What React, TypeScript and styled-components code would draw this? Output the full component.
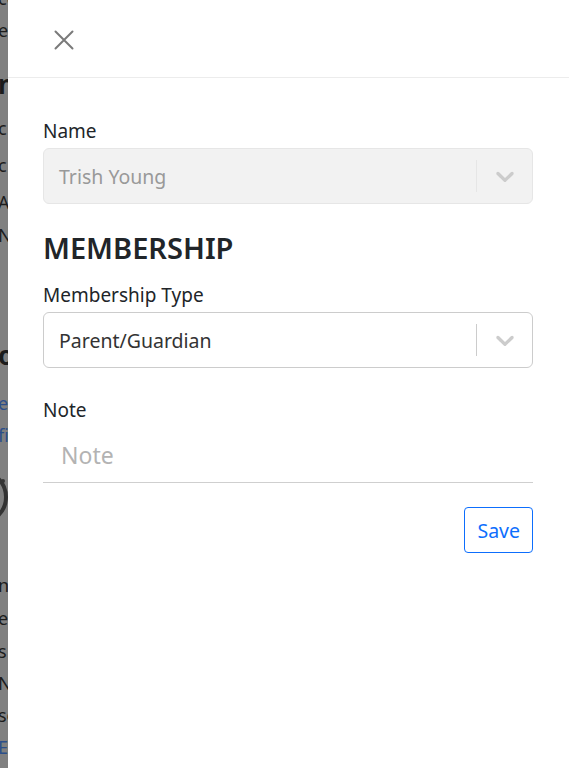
import styled, { createGlobalStyle } from "styled-components";

const GlobalStyle = createGlobalStyle`
  html, body {
    margin: 0;
    padding: 0;
    background: #fff;
    font-family: "Segoe UI", "Noto Sans", "Open Sans", sans-serif;
  }
  * { box-sizing: border-box; }
`;

const Page = styled.div`
  position: relative;
  width: 569px;
  height: 768px;
  overflow: hidden;
  background: #808080;
`;

const Backdrop = styled.div`
  width: 8px;
  height: 100%;
  overflow: hidden;
  background: #808080;
  display: flex;
  flex-direction: column;
`;

const BackLine = styled.div<{ $top: number; $color?: string; $size?: number; $bold?: boolean }>`
  margin-top: ${(p) => p.$top}px;
  height: 20px;
  line-height: 20px;
  font-size: ${(p) => p.$size ?? 18}px;
  font-weight: ${(p) => (p.$bold ? 700 : 400)};
  color: ${(p) => p.$color ?? "#1c1c1c"};
  white-space: nowrap;
  margin-left: -2px;
`;

const BackIcon = styled.svg`
  flex: none;
  margin-top: 22px;
`;

const Drawer = styled.aside`
  position: absolute;
  top: 0;
  left: 8px;
  right: 0;
  bottom: 0;
  background: #fff;
  display: flex;
  flex-direction: column;
`;

const Header = styled.header`
  height: 78px;
  border-bottom: 1px solid #ececec;
  display: flex;
  align-items: center;
  padding-left: 45px;
`;

const CloseButton = styled.button`
  width: 22px;
  height: 22px;
  padding: 0;
  border: none;
  background: none;
  display: flex;
  align-items: center;
  justify-content: center;
  cursor: pointer;
  margin-top: 2px;
`;

const Body = styled.div`
  padding: 40px 36px 0 35px;
  display: flex;
  flex-direction: column;
`;

const Label = styled.label`
  display: block;
  font-size: 19px;
  line-height: 26px;
  color: #212529;
  margin-bottom: 4px;
`;

const SelectBox = styled.div<{ $disabled?: boolean }>`
  height: 56px;
  border-radius: 6px;
  border: 1px solid ${(p) => (p.$disabled ? "#e6e6e6" : "#cccccc")};
  background: ${(p) => (p.$disabled ? "#f2f2f2" : "#fff")};
  display: flex;
  align-items: center;
`;

const SelectValue = styled.div<{ $disabled?: boolean }>`
  flex: 1;
  padding-left: 15px;
  font-size: 19.5px;
  color: ${(p) => (p.$disabled ? "#999999" : "#333333")};
`;

const Indicator = styled.div`
  display: flex;
  align-items: center;
  height: 100%;
`;

const Separator = styled.span<{ $disabled?: boolean }>`
  width: 1px;
  height: 32px;
  background: ${(p) => (p.$disabled ? "#e6e6e6" : "#cccccc")};
`;

const Chevron = styled.span`
  width: 55px;
  display: flex;
  align-items: center;
  justify-content: center;
`;

const SectionTitle = styled.h2`
  margin: 27px 0 17px 0;
  font-size: 29px;
  line-height: 34px;
  font-weight: 600;
  color: #212529;
`;

const Field = styled.div<{ $gap?: number }>`
  margin-top: ${(p) => p.$gap ?? 0}px;
`;

const NoteInput = styled.input`
  width: 100%;
  height: 56px;
  border: none;
  border-bottom: 1px solid #cfcfcf;
  padding: 0 18px;
  font-family: inherit;
  font-size: 23px;
  color: #333;
  outline: none;
  &::placeholder {
    color: #b3b3b3;
  }
`;

const Actions = styled.div`
  display: flex;
  justify-content: flex-end;
  margin-top: 24px;
`;

const SaveButton = styled.button`
  height: 46px;
  padding: 0 12px;
  border: 1px solid #0d6efd;
  border-radius: 4px;
  background: #fff;
  color: #0d6efd;
  font-family: inherit;
  font-size: 19.5px;
  cursor: pointer;
`;

const ChevronIcon = () => (
  <svg width="30" height="30" viewBox="0 0 20 20" aria-hidden="true">
    <path
      fill="#cccccc"
      d="M4.516 7.548c0.436-0.446 1.043-0.481 1.576 0l3.908 3.747 3.908-3.747c0.533-0.481 1.141-0.446 1.574 0 0.436 0.445 0.408 1.197 0 1.615-0.406 0.418-4.695 4.502-4.695 4.502-0.217 0.223-0.502 0.335-0.787 0.335s-0.57-0.112-0.789-0.335c0 0-4.287-4.084-4.695-4.502s-0.436-1.17 0-1.615z"
    />
  </svg>
);

const Select = ({ value, disabled }: { value: string; disabled?: boolean }) => (
  <SelectBox $disabled={disabled}>
    <SelectValue $disabled={disabled}>{value}</SelectValue>
    <Indicator>
      <Separator $disabled={disabled} />
      <Chevron>
        <ChevronIcon />
      </Chevron>
    </Indicator>
  </SelectBox>
);

export default function App() {
  return (
    <>
      <GlobalStyle />
      <Page>
        <Backdrop>
          <BackLine $top={-12}>co</BackLine>
          <BackLine $top={12}>e</BackLine>
          <BackLine $top={34} $size={26} $bold>n</BackLine>
          <BackLine $top={24}>c</BackLine>
          <BackLine $top={17}>c</BackLine>
          <BackLine $top={17}>A</BackLine>
          <BackLine $top={13}>N</BackLine>
          <BackLine $top={100} $size={26} $bold>o</BackLine>
          <BackLine $top={28} $color="#2c4f8a">e</BackLine>
          <BackLine $top={12} $color="#2c4f8a">fi</BackLine>
          <BackIcon width="8" height="60" viewBox="0 0 8 60">
            <circle cx="-20" cy="30" r="26" fill="none" stroke="#333" strokeWidth="4" />
            <circle cx="3" cy="14" r="2" fill="#333" />
          </BackIcon>
          <BackLine $top={48}>ns</BackLine>
          <BackLine $top={13}>e</BackLine>
          <BackLine $top={13}>s</BackLine>
          <BackLine $top={12}>N</BackLine>
          <BackLine $top={12}>so</BackLine>
          <BackLine $top={12} $color="#2c4f8a">E</BackLine>
        </Backdrop>
        <Drawer>
          <Header>
            <CloseButton aria-label="Close">
              <svg width="20" height="20" viewBox="0 0 20 20">
                <path d="M1.5 1.5 L18.5 18.5 M18.5 1.5 L1.5 18.5" stroke="#7a7a7a" strokeWidth="2" strokeLinecap="round" />
              </svg>
            </CloseButton>
          </Header>
          <Body>
            <Field>
              <Label>Name</Label>
              <Select value="Trish Young" disabled />
            </Field>
            <SectionTitle>MEMBERSHIP</SectionTitle>
            <Field>
              <Label>Membership Type</Label>
              <Select value="Parent/Guardian" />
            </Field>
            <Field $gap={29}>
              <Label>Note</Label>
              <NoteInput placeholder="Note" />
            </Field>
            <Actions>
              <SaveButton>Save</SaveButton>
            </Actions>
          </Body>
        </Drawer>
      </Page>
    </>
  );
}
